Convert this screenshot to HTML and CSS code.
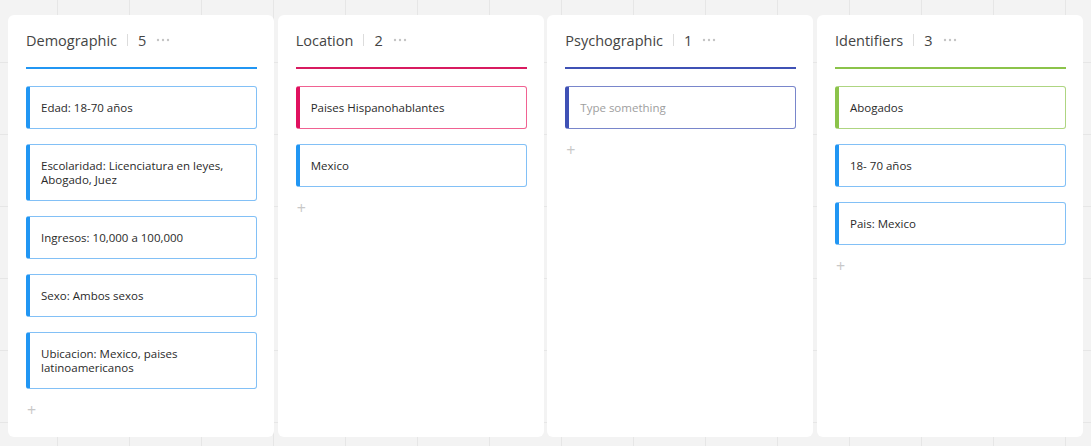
FILE: index.html
```html
<!DOCTYPE html>
<html>
<head>
<meta charset="utf-8">
<link rel="stylesheet" href="styles.css">
</head>
<body>
<div class="board">
  <section class="col col-blue">
    <header class="col-head">
      <span class="col-title">Demographic</span>
      <span class="sep"></span>
      <span class="count">5</span>
      <svg class="dots" width="14" height="4" viewBox="0 0 14 4"><circle cx="2" cy="2" r="1.2"/><circle cx="7" cy="2" r="1.2"/><circle cx="12" cy="2" r="1.2"/></svg>
    </header>
    <div class="cards">
      <div class="card card-blue">Edad: 18-70 años</div>
      <div class="card card-blue">Escolaridad: Licenciatura en leyes, Abogado, Juez</div>
      <div class="card card-blue">Ingresos: 10,000 a 100,000</div>
      <div class="card card-blue">Sexo: Ambos sexos</div>
      <div class="card card-blue">Ubicacion: Mexico, paises latinoamericanos</div>
    </div>
    <div class="add">+</div>
  </section>
  <section class="col col-pink">
    <header class="col-head">
      <span class="col-title">Location</span>
      <span class="sep"></span>
      <span class="count">2</span>
      <svg class="dots" width="14" height="4" viewBox="0 0 14 4"><circle cx="2" cy="2" r="1.2"/><circle cx="7" cy="2" r="1.2"/><circle cx="12" cy="2" r="1.2"/></svg>
    </header>
    <div class="cards">
      <div class="card card-pink">Paises Hispanohablantes</div>
      <div class="card card-blue">Mexico</div>
    </div>
    <div class="add">+</div>
  </section>
  <section class="col col-indigo">
    <header class="col-head">
      <span class="col-title">Psychographic</span>
      <span class="sep"></span>
      <span class="count">1</span>
      <svg class="dots" width="14" height="4" viewBox="0 0 14 4"><circle cx="2" cy="2" r="1.2"/><circle cx="7" cy="2" r="1.2"/><circle cx="12" cy="2" r="1.2"/></svg>
    </header>
    <div class="cards">
      <div class="card card-indigo placeholder">Type something</div>
    </div>
    <div class="add">+</div>
  </section>
  <section class="col col-green">
    <header class="col-head">
      <span class="col-title">Identifiers</span>
      <span class="sep"></span>
      <span class="count">3</span>
      <svg class="dots" width="14" height="4" viewBox="0 0 14 4"><circle cx="2" cy="2" r="1.2"/><circle cx="7" cy="2" r="1.2"/><circle cx="12" cy="2" r="1.2"/></svg>
    </header>
    <div class="cards">
      <div class="card card-green">Abogados</div>
      <div class="card card-blue">18- 70 años</div>
      <div class="card card-blue">Pais: Mexico</div>
    </div>
    <div class="add">+</div>
  </section>
</div>
</body>
</html>
```
FILE: styles.css
```css
* { box-sizing: border-box; }
html, body { margin: 0; height: 100%; }
body {
  font-family: "Open Sans", "Noto Sans", sans-serif;
  background-color: #f3f3f3;
  background-image:
    linear-gradient(to right, #e6e6e6 1px, transparent 1px),
    linear-gradient(to bottom, #e6e6e6 1px, transparent 1px);
  background-size: 72px 72px;
  background-position: 57px 62px;
  overflow: hidden;
}
.board {
  display: grid;
  grid-template-columns: repeat(4, 266px);
  column-gap: 3.67px;
  padding: 15px 0 0 8px;
}
.col {
  background: #fff;
  border-radius: 6px;
  height: 422px;
  padding: 0 17px 0 18px;
}
.col-head {
  display: flex;
  align-items: center;
  height: 54px;
  border-bottom: 2px solid #2196f3;
  padding-bottom: 2px;
  color: #444;
}
.col-pink .col-head { border-color: #d81b60; }
.col-indigo .col-head { border-color: #3f51b5; }
.col-green .col-head { border-color: #8bc34a; }
.col-title { font-size: 14.5px; }
.sep {
  width: 1px;
  height: 12px;
  background: #dcdcdc;
  margin: 0 10px 0 10px;
}
.count { font-size: 14.5px; }
.dots { fill: #c4c4c4; margin-left: 10px; }
.cards {
  display: flex;
  flex-direction: column;
  gap: 15px;
  margin-top: 17px;
}
.card {
  font-size: 11.5px;
  line-height: 14px;
  color: #2a2a2a;
  padding: 13.5px 12px 13.5px 11px;
  border: 1px solid #64b5f6;
  border-left: 4px solid #2196f3;
  border-radius: 3px;
}
.card-blue { border-color: #82c0f6; border-left-color: #2196f3; }
.card-pink { border-color: #f06292; border-left-color: #e0115f; }
.card-indigo { border-color: #7986cb; border-left-color: #3f51b5; }
.card-green { border-color: #aed581; border-left-color: #8bc34a; }
.placeholder { color: #9e9e9e; }
.add {
  color: #c8c8c8;
  font-size: 16px;
  line-height: 16px;
  margin-top: 13px;
  padding-left: 1px;
}
```
